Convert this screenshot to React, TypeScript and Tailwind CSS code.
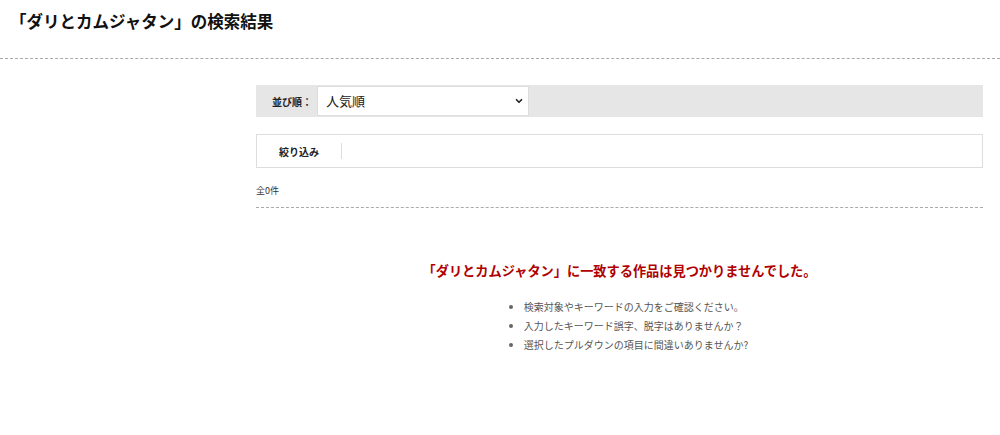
import { ChevronDown } from 'lucide-react';

const tips = [
  '検索対象やキーワードの入力をご確認ください。',
  '入力したキーワード誤字、脱字はありませんか？',
  '選択したプルダウンの項目に間違いありませんか?',
];

export default function App() {
  return (
    <div
      className="min-h-[435px] w-full bg-white text-[#333]"
      style={{ fontFamily: '"Noto Sans CJK JP", "Noto Sans", sans-serif' }}
    >
      {/* Page title */}
      <header className="h-[59px] border-b border-dashed border-[#aaa] pl-[10px] pt-[9px]">
        <h1 className="text-[16.5px] font-bold leading-6 text-[#111]">「ダリとカムジャタン」の検索結果</h1>
      </header>

      <div className="ml-[256px] mr-[17px] pt-[26px]">
        {/* Sort */}
        <div className="flex h-8 items-center bg-[#e6e6e6] pl-4">
          <span className="w-[45px] text-[10px] font-bold text-[#222]">並び順：</span>
          <div className="flex h-[30px] w-[212px] items-center justify-between border border-[#ddd] bg-white pl-2 pr-[4px]">
            <span className="text-[13px] text-[#222]">人気順</span>
            <ChevronDown className="h-[10px] w-[10px] text-[#222]" strokeWidth={4} />
          </div>
        </div>

        {/* Filter */}
        <div className="mt-[17px] flex h-[34px] items-center border border-[#ddd] bg-white">
          <span className="w-[84px] text-center text-[10px] font-bold text-[#222]">絞り込み</span>
          <span className="h-4 w-px bg-[#ddd]" />
        </div>

        <div className="mt-[16px] pb-[9px] text-[9px] leading-[14px] text-[#333]">全0件</div>
        <div className="border-b border-dashed border-[#aaa]" />

        {/* Empty result */}
        <div className="pt-[53px] text-center">
          <p className="text-[13.2px] font-bold leading-5 text-[#b00000]">
            「ダリとカムジャタン」に一致する作品は見つかりませんでした。
          </p>
          <ul className="mt-[16px] inline-block list-disc pl-[33px] text-left text-[10px] leading-[19px] text-[#555]">
            {tips.map((t) => (
              <li key={t} className="marker:text-[#666]">
                {t}
              </li>
            ))}
          </ul>
        </div>
      </div>
    </div>
  );
}
